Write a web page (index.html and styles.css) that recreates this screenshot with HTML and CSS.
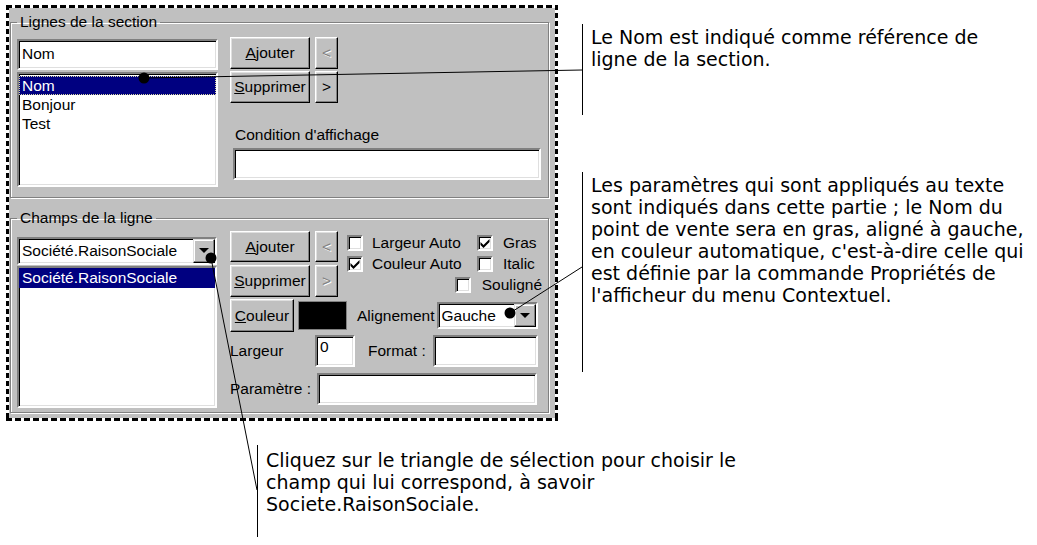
FILE: index.html
```html
<!DOCTYPE html>
<html lang="fr">
<head>
    <meta charset="UTF-8">
    <title>Lignes de la section</title>
    <link rel="stylesheet" href="styles.css">
</head>
<body>
<div class="page">
    <div class="top">
        <!-- Dialog capture -->
        <div class="frame">
            <div class="window">
                <fieldset class="group g1">
                    <legend>Lignes de la section</legend>
                    <div class="cols">
                        <div class="col-left">
                            <div class="sunken field name-field">Nom</div>
                            <div class="sunken list l1">
                                <div class="item sel focus">Nom</div>
                                <div class="item">Bonjour</div>
                                <div class="item">Test</div>
                            </div>
                        </div>
                        <div class="col-right">
                            <div class="btnrow">
                                <div class="btn wide"><span><u>A</u>jouter</span></div>
                                <div class="btn arrow disabled">&lt;</div>
                            </div>
                            <div class="btnrow second">
                                <div class="btn wide"><span><u>S</u>upprimer</span></div>
                                <div class="btn arrow">&gt;</div>
                            </div>
                            <div class="cond-label">Condition d'affichage</div>
                            <div class="sunken field cond-field"></div>
                        </div>
                    </div>
                </fieldset>

                <fieldset class="group g2">
                    <legend>Champs de la ligne</legend>
                    <div class="cols">
                        <div class="col-left">
                            <div class="sunken combo field-combo">
                                <span class="combo-text">Société.RaisonSociale</span>
                                <span class="drop"><i class="tri"></i></span>
                            </div>
                            <div class="sunken list l2">
                                <div class="item sel">Société.RaisonSociale</div>
                            </div>
                        </div>
                        <div class="col-right">
                            <div class="upper">
                                <div class="btncol">
                                    <div class="btnrow">
                                        <div class="btn wide"><span><u>A</u>jouter</span></div>
                                        <div class="btn arrow disabled">&lt;</div>
                                    </div>
                                    <div class="btnrow second">
                                        <div class="btn wide"><span><u>S</u>upprimer</span></div>
                                        <div class="btn arrow disabled">&gt;</div>
                                    </div>
                                </div>
                                <div class="checks">
                                    <div class="check"><span class="sunken box"></span>Largeur Auto</div>
                                    <div class="check col2"><span class="sunken box"><svg viewBox="0 0 12 12"><polygon points="1.5,5 4.5,8 10.5,2 10.5,5 4.5,11 1.5,8"/></svg></span>Gras</div>
                                    <div class="check"><span class="sunken box"><svg viewBox="0 0 12 12"><polygon points="1.5,5 4.5,8 10.5,2 10.5,5 4.5,11 1.5,8"/></svg></span>Couleur Auto</div>
                                    <div class="check col2"><span class="sunken box"></span>Italic</div>
                                    <div class="check soul"><span class="sunken box"></span>Souligné</div>
                                </div>
                            </div>
                            <div class="colorrow">
                                <div class="btn couleur"><span><u>C</u>ouleur</span></div>
                                <div class="swatch"></div>
                                <div class="align-label">Alignement</div>
                                <div class="sunken combo align-combo">
                                    <span class="combo-text">Gauche</span>
                                    <span class="drop"><i class="tri"></i></span>
                                </div>
                            </div>
                            <div class="row largeur-row">
                                <div class="lab lab-largeur">Largeur</div>
                                <div class="sunken field small-field">0</div>
                                <div class="lab lab-format">Format :</div>
                                <div class="sunken field format-field"></div>
                            </div>
                            <div class="row param-row">
                                <div class="lab lab-param">Paramètre :</div>
                                <div class="sunken field param-field"></div>
                            </div>
                        </div>
                    </div>
                </fieldset>
            </div>
        </div>

        <!-- Notes on the right -->
        <div class="notes">
            <div class="callout c1">Le Nom est indiqué comme référence de<br>ligne de la section.</div>
            <div class="callout c2">Les paramètres qui sont appliqués au texte<br>sont indiqués dans cette partie ; le Nom du<br>point de vente sera en gras, aligné à gauche,<br>en couleur automatique, c'est-à-dire celle qui<br>est définie par la commande Propriétés de<br>l'afficheur du menu Contextuel.</div>
        </div>
    </div>

    <div class="callout c3">Cliquez sur le triangle de sélection pour choisir le<br>champ qui lui correspond, à savoir<br>Societe.RaisonSociale.</div>

    <!-- leader lines -->
    <svg class="leaders" width="1037" height="545" viewBox="0 0 1037 545">
        <line x1="144" y1="78" x2="582" y2="70"/>
        <circle cx="144" cy="78" r="5.5"/>
        <line x1="510" y1="313" x2="582" y2="267"/>
        <circle cx="510" cy="313" r="5.5"/>
        <line x1="211" y1="258" x2="257" y2="490"/>
        <circle cx="211" cy="258" r="5.5"/>
    </svg>
</div>
</body>
</html>
```
FILE: styles.css
```css
* {
    box-sizing: border-box;
}

body {
    margin: 0;
    background: #fff;
    font-family: "Liberation Sans", Arial, sans-serif;
    font-size: 15.5px;
    color: #000;
}

.page {
    position: relative;
    width: 1037px;
    height: 545px;
    overflow: hidden;
}

.top {
    display: flex;
    align-items: flex-start;
}

/* dashed selection frame round the dialog */
.frame {
    flex: none;
    width: 552px;
    height: 416px;
    margin: 5px 0 0 6px;
    padding: 3px;
    background:
        repeating-linear-gradient(90deg, #000 0 6px, transparent 6px 9px) left top / 100% 3px no-repeat,
        repeating-linear-gradient(90deg, #000 0 6px, transparent 6px 9px) left bottom / 100% 3px no-repeat,
        repeating-linear-gradient(180deg, #000 0 5px, transparent 5px 8px) left top / 3px 100% no-repeat,
        repeating-linear-gradient(180deg, #000 0 5px, transparent 5px 8px) right top / 3px 100% no-repeat;
}

.window {
    height: 100%;
    background: #c0c0c0;
    padding: 5px 6px 0 1px;
}

.group {
    margin: 0;
    min-width: 0;
    padding: 6px 6px 10px 6px;
    border: 1px solid #808080;
    box-shadow: inset 1px 1px #fff, 1px 1px #fff;
}

.group legend {
    padding: 0 3px;
    line-height: 18px;
}

.g2 {
    margin-top: 11px;
    padding-top: 4px;
    padding-bottom: 4px;
}

.cols {
    display: flex;
    gap: 12px;
}

.g2 .cols {
    gap: 13px;
}

.col-left {
    width: 201px;
    display: flex;
    flex-direction: column;
}

.g2 .col-left {
    width: 200px;
}

.col-right {
    display: flex;
    flex-direction: column;
}

/* win95 bevels */
.sunken {
    background: #fff;
    border: 2px solid;
    border-color: #808080 #fff #fff #808080;
    box-shadow: inset 1px 1px #000, inset -1px -1px #dfdfdf;
}

.btn {
    display: flex;
    align-items: center;
    justify-content: center;
    background: #c0c0c0;
    border: 1px solid;
    border-color: #fff #000 #000 #fff;
    box-shadow: inset -1px -1px #808080, inset 1px 1px #dfdfdf;
    white-space: nowrap;
}

.btn.disabled {
    color: #808080;
    text-shadow: 1px 1px #fff;
}

.field {
    padding: 0 3px;
    white-space: nowrap;
}

.name-field {
    margin-top: 2px;
    height: 31px;
    line-height: 26px;
}

.list {
    margin-top: 2px;
    height: 115px;
    padding-top: 2px;
}

.item {
    height: 19px;
    line-height: 19px;
    padding-left: 3px;
    white-space: nowrap;
}

.item.sel {
    background: #000080;
    color: #fff;
}

.item.focus {
    outline: 1px dotted #d8d8a0;
    outline-offset: -1px;
}

.btnrow {
    display: flex;
    gap: 5px;
    height: 32px;
}

.btnrow.second {
    margin-top: 2px;
}

.btn.wide {
    width: 80px;
}

.btn.arrow {
    width: 23px;
}

.cond-label {
    margin-top: 23px;
    line-height: 18px;
    padding-left: 5px;
}

.cond-field {
    margin: 4px 0 0 3px;
    width: 308px;
    height: 32px;
}

/* group 2 */
.field-combo {
    margin-top: 6px;
    height: 28px;
}

.combo {
    display: flex;
    align-items: stretch;
}

.combo-text {
    flex: 1;
    padding-left: 3px;
    white-space: nowrap;
    display: flex;
    align-items: center;
    overflow: hidden;
}

.drop {
    width: 22px;
    display: flex;
    align-items: center;
    justify-content: center;
    background: #c0c0c0;
    border: 1px solid;
    border-color: #dfdfdf #000 #000 #dfdfdf;
    box-shadow: inset -1px -1px #808080, inset 1px 1px #fff;
}

.tri {
    width: 0;
    height: 0;
    margin-top: -1px;
    border-left: 5px solid transparent;
    border-right: 5px solid transparent;
    border-top: 5px solid #000;
}

.l2 {
    margin-top: 1px;
    height: 142px;
    padding-top: 0;
}

.l2 .item {
    height: 20px;
    line-height: 20px;
}

.upper {
    display: flex;
    height: 66px;
}

.g2 .btnrow {
    height: 31px;
}

.g2 .btnrow.second {
    margin-top: 3px;
    height: 32px;
}

.checks {
    margin: 4px 0 0 9px;
    width: 195px;
    display: grid;
    grid-template-columns: 130px auto;
    grid-auto-rows: 16px;
    row-gap: 5px;
}

.check {
    display: flex;
    align-items: center;
    gap: 9px;
    line-height: 16px;
    white-space: nowrap;
}

.check.col2 {
    gap: 10px;
}

.check.soul {
    grid-column: 1 / -1;
    justify-self: end;
    gap: 11px;
}

.box {
    flex: none;
    width: 16px;
    height: 16px;
    display: block;
}

.box svg {
    display: block;
    width: 12px;
    height: 12px;
}

.box polygon {
    fill: #000;
}

.colorrow {
    display: flex;
    align-items: center;
    margin-top: 2px;
    height: 33px;
}

.btn.couleur {
    width: 64px;
    height: 33px;
}

.swatch {
    width: 49px;
    height: 29px;
    margin-left: 4px;
    background: #000;
    border: 1px solid #808080;
}

.align-label {
    margin-left: 10px;
}

.align-combo {
    margin-left: 2px;
    width: 101px;
    height: 27px;
}

.row {
    display: flex;
    align-items: center;
    height: 32px;
}

.largeur-row {
    margin-top: 3px;
}

.param-row {
    margin-top: 6px;
}

.lab {
    white-space: nowrap;
}

.lab-largeur {
    width: 85px;
}

.small-field {
    width: 40px;
    height: 32px;
    line-height: 20px;
}

.lab-format {
    width: 65px;
    margin-left: 13px;
}

.format-field {
    width: 105px;
    height: 32px;
}

.lab-param {
    width: 87px;
}

.param-field {
    width: 220px;
    height: 32px;
}

/* notes */
.notes {
    margin-left: 24px;
}

.callout {
    font-family: "DejaVu Sans", Verdana, sans-serif;
    font-size: 19px;
    line-height: 22px;
    color: #000;
    border-left: 1px solid #000;
    padding-left: 8px;
    white-space: nowrap;
}

.c1 {
    margin-top: 24px;
    height: 91px;
    padding-top: 2px;
}

.c2 {
    margin-top: 57px;
    height: 200px;
    padding-top: 2px;
}

.c3 {
    margin: 24px 0 0 257px;
    height: 92px;
    padding-top: 4px;
}

.leaders {
    position: absolute;
    left: 0;
    top: 0;
    pointer-events: none;
}

.leaders line {
    stroke: #000;
    stroke-width: 1;
}

.leaders circle {
    fill: #000;
}
```
